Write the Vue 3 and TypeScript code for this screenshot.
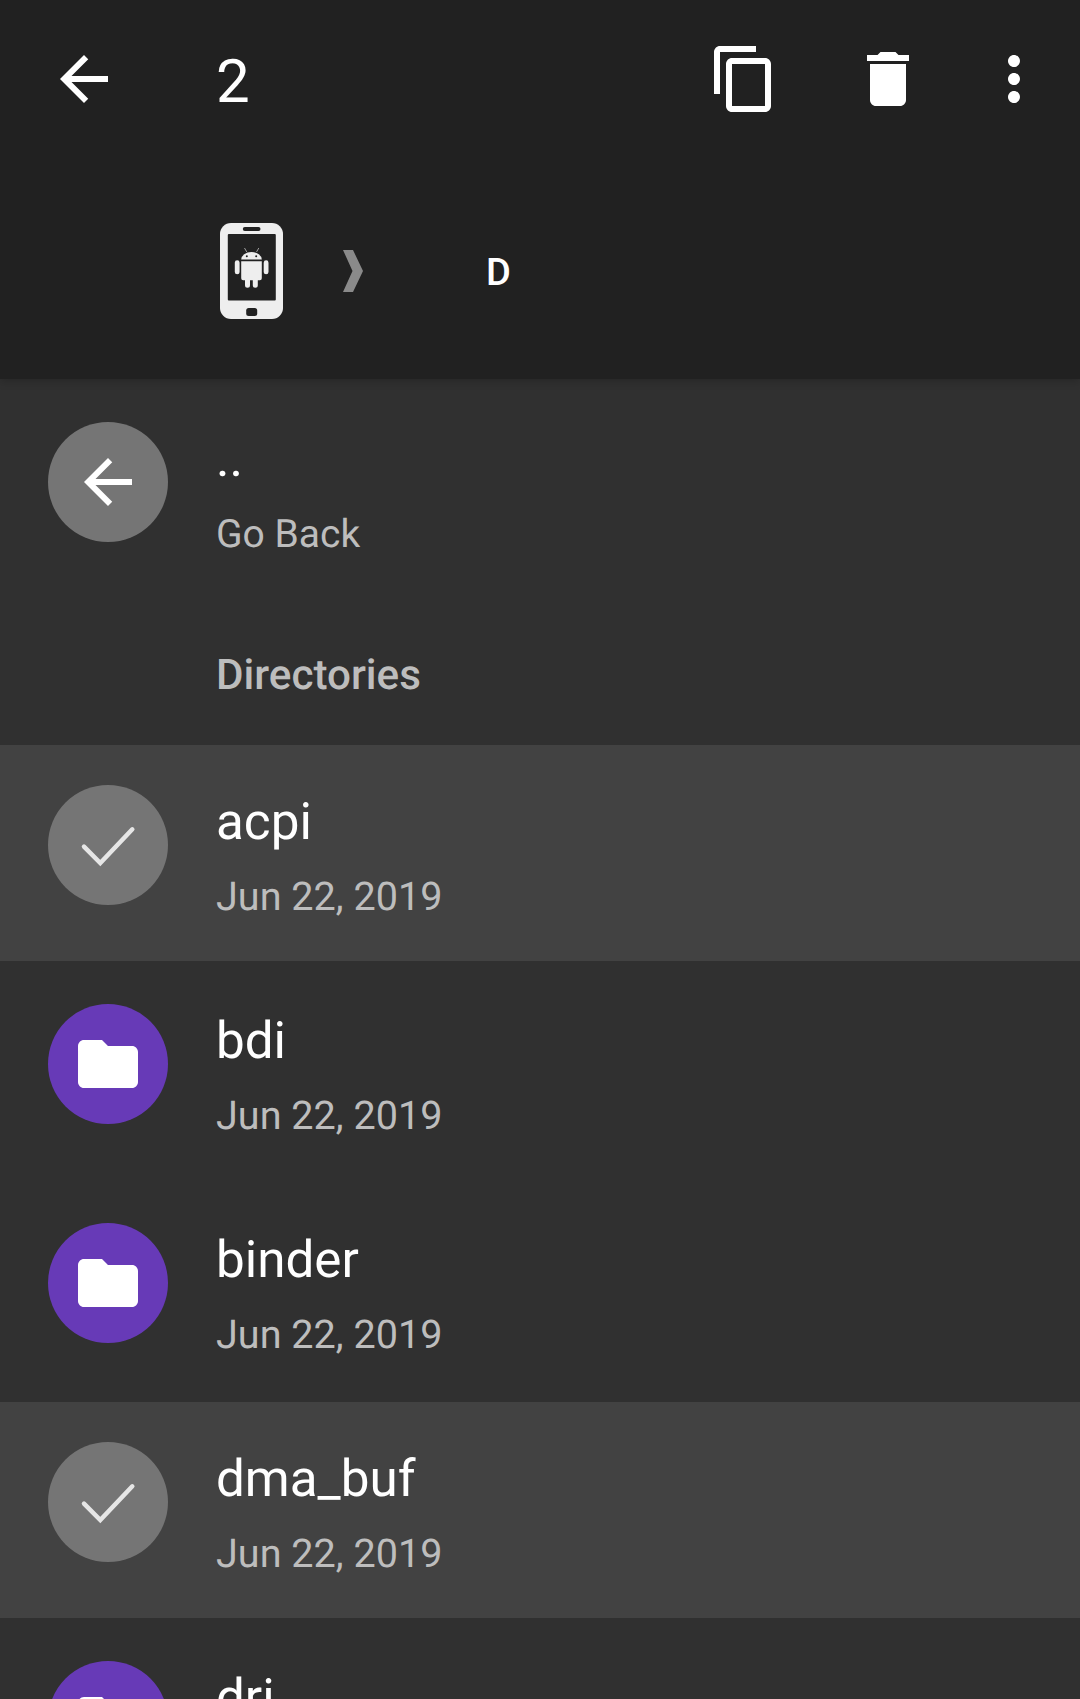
<script setup lang="ts">
type Row = { name: string; date: string; selected?: boolean }

const rows: Row[] = [
  { name: 'acpi', date: 'Jun 22, 2019', selected: true },
  { name: 'bdi', date: 'Jun 22, 2019' },
  { name: 'binder', date: 'Jun 22, 2019' },
  { name: 'dma_buf', date: 'Jun 22, 2019', selected: true },
  { name: 'dri', date: 'Jun 22, 2019' },
]
</script>

<template>
  <div class="screen">
    <header class="appbar">
      <div class="toolbar">
        <svg class="icon" viewBox="0 0 24 24"><path d="M20 11H7.83l5.59-5.59L12 4l-8 8 8 8 1.41-1.41L7.83 13H20v-2z" /></svg>
        <span class="count">2</span>
        <div class="actions">
          <svg class="icon copy" viewBox="0 0 24 24"><path d="M16 1H4c-1.1 0-2 .9-2 2v14h2V3h12V1zm3 4H8c-1.1 0-2 .9-2 2v14c0 1.1.9 2 2 2h11c1.1 0 2-.9 2-2V7c0-1.1-.9-2-2-2zm0 16H8V7h11v14z" /></svg>
          <svg class="icon trash" viewBox="0 0 24 24"><path d="M6 19c0 1.1.9 2 2 2h8c1.1 0 2-.9 2-2V7H6v12zM19 4h-3.5l-1-1h-5l-1 1H5v2h14V4z" /></svg>
          <svg class="icon" viewBox="0 0 24 24"><path d="M12 8c1.1 0 2-.9 2-2s-.9-2-2-2-2 .9-2 2 .9 2 2 2zm0 2c-1.1 0-2 .9-2 2s.9 2 2 2 2-.9 2-2-.9-2-2-2zm0 6c-1.1 0-2 .9-2 2s.9 2 2 2 2-.9 2-2-.9-2-2-2z" /></svg>
        </div>
      </div>
      <div class="crumbs">
        <svg class="phone" viewBox="0 0 63 96">
          <rect width="63" height="96" rx="11" fill="#eeeeee" />
          <rect x="7.8" y="11" width="48" height="66.6" rx="1" fill="#212121" />
          <rect x="22.8" y="4" width="17.7" height="4" rx="2" fill="#212121" />
          <rect x="26.2" y="85" width="11" height="8" rx="2.5" fill="#212121" />
          <g fill="#eeeeee">
            <path d="M21.2 36.6a10.3 7.6 0 0 1 20.6 0z" />
            <path d="M21.2 38.3h20.6v17a2 2 0 0 1-2 2h-2v5a2.5 2.5 0 0 1-5 0v-5h-2.8v5a2.5 2.5 0 0 1-5 0v-5h-1.8a2 2 0 0 1-2-2z" />
            <rect x="14.8" y="37.3" width="4.8" height="14" rx="2.4" />
            <rect x="43.7" y="37.3" width="4.8" height="14" rx="2.4" />
          </g>
          <path d="M24.5 25l2.3 4M38.8 25l-2.3 4" stroke="#bdbdbd" stroke-width="0.8" fill="none" />
          <circle cx="26.8" cy="33.3" r="1" fill="#212121" />
          <circle cx="36.2" cy="33.3" r="1" fill="#212121" />
        </svg>
        <svg class="chevron" viewBox="0 0 20 42"><polygon points="0,0 10,0 20,21 10,42 0,42 9.5,21" /></svg>
        <span class="crumb">D</span>
      </div>
    </header>

    <main class="list">
      <div class="row back">
        <div class="avatar grey">
          <svg class="icon" viewBox="0 0 24 24"><path d="M20 11H7.83l5.59-5.59L12 4l-8 8 8 8 1.41-1.41L7.83 13H20v-2z" /></svg>
        </div>
        <div class="text">
          <div class="name">..</div>
          <div class="date">Go Back</div>
        </div>
      </div>

      <div class="section">Directories</div>

      <div v-for="row in rows" :key="row.name" class="row" :class="{ selected: row.selected }">
        <div class="avatar" :class="row.selected ? 'grey' : 'purple'">
          <svg v-if="row.selected" class="tick" viewBox="0 0 120 120"><path d="M36 61.7L52.3 78L84.3 44.3" /></svg>
          <svg v-else class="icon" viewBox="0 0 24 24"><path d="M10 4H4c-1.1 0-1.99.9-1.99 2L2 18c0 1.1.9 2 2 2h16c1.1 0 2-.9 2-2V8c0-1.1-.9-2-2-2h-8l-2-2z" /></svg>
        </div>
        <div class="text">
          <div class="name">{{ row.name }}</div>
          <div class="date">{{ row.date }}</div>
        </div>
      </div>
    </main>
  </div>
</template>

<style>
html,
body {
  margin: 0;
  background: #303030;
}
</style>

<style scoped>
.screen {
  width: 1080px;
  height: 1699px;
  overflow: hidden;
  background: #303030;
  font-family: Roboto, "Liberation Sans", sans-serif;
  text-rendering: geometricPrecision;
  color: #fff;
}

.appbar {
  position: relative;
  height: 379px;
  box-sizing: border-box;
  padding-top: 43px;
  background: #212121;
  box-shadow: 0 3px 8px rgba(0, 0, 0, 0.18);
}

.toolbar {
  display: flex;
  align-items: flex-start;
  padding: 0 30px 0 48px;
}

.icon {
  display: block;
  width: 72px;
  height: 72px;
  fill: #fff;
  flex: none;
}

.count {
  margin-left: 96px;
  font-size: 60px;
  line-height: 77px;
}

.actions {
  margin-left: auto;
  display: flex;
}

.copy {
  margin-right: 72px;
}

.trash {
  margin-right: 54px;
}

.crumbs {
  display: flex;
  align-items: center;
  margin-top: 103px;
  padding-left: 220px;
}

.phone {
  display: block;
  width: 63px;
  height: 96px;
}

.chevron {
  display: block;
  width: 20px;
  height: 42px;
  margin-left: 60px;
  fill: #8a8a8a;
}

.crumb {
  margin-left: 123px;
  padding-top: 4px;
  font-size: 38px;
  font-weight: 500;
}

.list {
  padding-top: 3px;
}

.row {
  display: flex;
  height: 216px;
  margin-bottom: 3px;
  padding: 40px 0 0 48px;
  box-sizing: border-box;
}

.row.selected {
  background: #424242;
}

.row.back {
  margin-bottom: 0;
}

.avatar {
  width: 120px;
  height: 120px;
  border-radius: 50%;
  display: flex;
  align-items: center;
  justify-content: center;
  flex: none;
}

.grey {
  background: #757575;
}

.purple {
  background: #673ab7;
}

.tick {
  width: 120px;
  height: 120px;
  fill: none;
  stroke: #e6e6e6;
  stroke-width: 4.5;
  stroke-linecap: round;
}

.text {
  margin-left: 48px;
  padding-top: 7px;
}

.name {
  font-size: 51.2px;
  line-height: 60px;
}

.date {
  margin-top: 19px;
  font-size: 39.6px;
  line-height: 52px;
  color: #bdbdbd;
}

.back .date {
  font-size: 39px;
}

.section {
  height: 147px;
  box-sizing: border-box;
  padding: 52px 0 0 216px;
  font-size: 42.2px;
  line-height: 52px;
  font-weight: 500;
  color: #bdbdbd;
}
</style>
